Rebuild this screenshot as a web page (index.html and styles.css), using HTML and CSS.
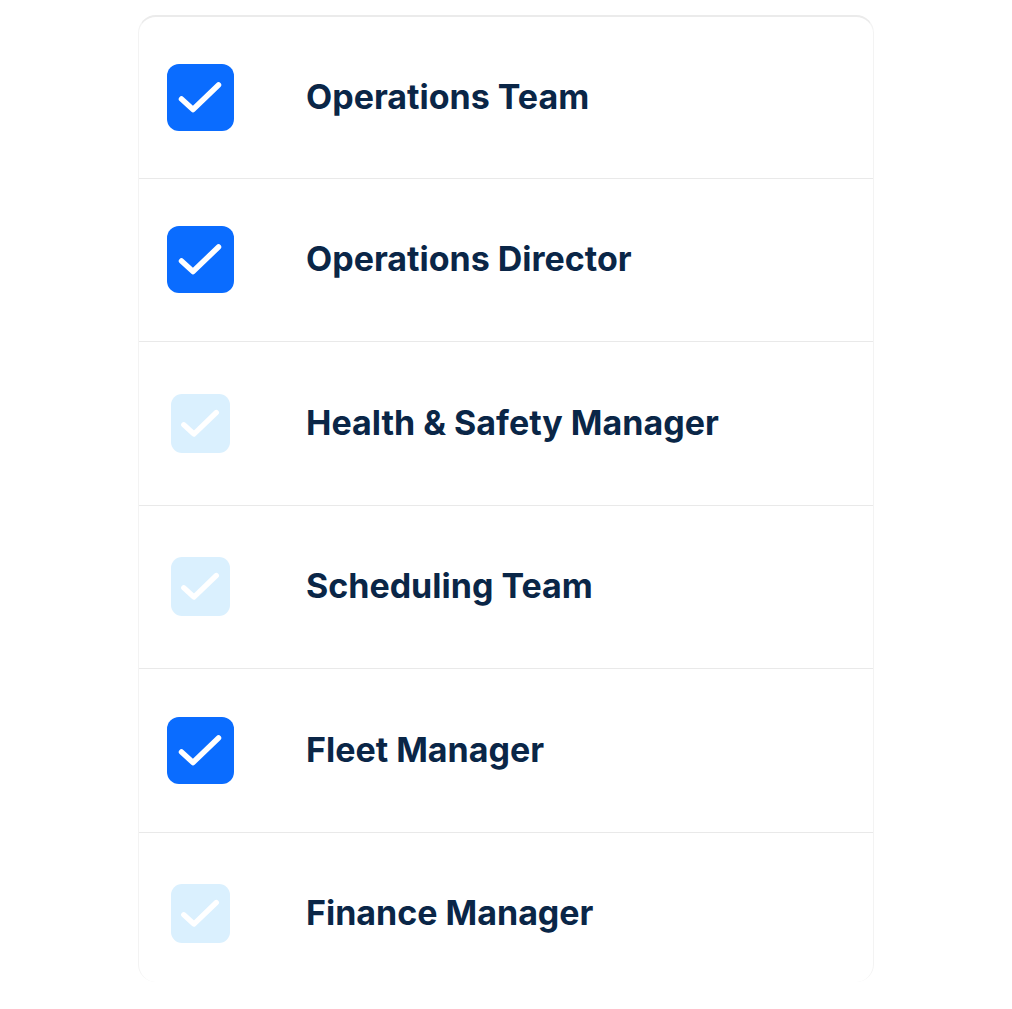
FILE: index.html
```html
<!DOCTYPE html>
<html lang="en">
<head>
<meta charset="utf-8">
<title>Recipients</title>
<link rel="stylesheet" href="styles.css">
</head>
<body>
<div class="card">
  <div class="row">
    <div class="box-slot"><span class="box on"><svg viewBox="0 0 67 67"><path d="M14.5 35 L26 45.5 L51.5 21"/></svg></span></div>
    <span class="label">Operations Team</span>
  </div>
  <div class="row">
    <div class="box-slot"><span class="box on"><svg viewBox="0 0 67 67"><path d="M14.5 35 L26 45.5 L51.5 21"/></svg></span></div>
    <span class="label">Operations Director</span>
  </div>
  <div class="row">
    <div class="box-slot"><span class="box off"><svg viewBox="0 0 67 67"><path d="M14.5 35 L26 45.5 L51.5 21"/></svg></span></div>
    <span class="label">Health &amp; Safety Manager</span>
  </div>
  <div class="row">
    <div class="box-slot"><span class="box off"><svg viewBox="0 0 67 67"><path d="M14.5 35 L26 45.5 L51.5 21"/></svg></span></div>
    <span class="label">Scheduling Team</span>
  </div>
  <div class="row">
    <div class="box-slot"><span class="box on"><svg viewBox="0 0 67 67"><path d="M14.5 35 L26 45.5 L51.5 21"/></svg></span></div>
    <span class="label">Fleet Manager</span>
  </div>
  <div class="row">
    <div class="box-slot"><span class="box off"><svg viewBox="0 0 67 67"><path d="M14.5 35 L26 45.5 L51.5 21"/></svg></span></div>
    <span class="label">Finance Manager</span>
  </div>
</div>
</body>
</html>
```
FILE: styles.css
```css
html, body {
  margin: 0;
  padding: 0;
  background: #ffffff;
}
body {
  padding: 15px 0 0 138px;
  font-family: Inter, "Noto Sans", sans-serif;
}
.card {
  box-sizing: border-box;
  width: 736px;
  height: 967px;
  border: 1px solid #f3f3f3;
  border-top: 2px solid #ebebeb;
  border-bottom: none;
  border-radius: 18px;
  overflow: hidden;
  background: #fff;
}
.row {
  box-sizing: border-box;
  height: 163.5px;
  display: flex;
  align-items: center;
  border-bottom: 1.5px solid #e9e9e9;
}
.row:first-child {
  height: 161.5px;
}
.box-slot {
  width: 67px;
  height: 67px;
  margin-left: 28px;
  margin-right: 72px;
  display: flex;
  align-items: center;
  justify-content: center;
}
.box {
  display: block;
  width: 67px;
  height: 67px;
  border-radius: 12px;
  background: #0a6cff;
}
.box svg {
  display: block;
  width: 100%;
  height: 100%;
}
.box path {
  fill: none;
  stroke: #ffffff;
  stroke-width: 5.5;
  stroke-linecap: round;
  stroke-linejoin: round;
}
.box.off {
  width: 59px;
  height: 59px;
  border-radius: 11px;
  background: #daf0fe;
}
.box.off path {
  stroke-width: 6;
}
.label {
  font-size: 34px;
  font-weight: 700;
  color: #0a2647;
  padding-bottom: 2px;
}
```
